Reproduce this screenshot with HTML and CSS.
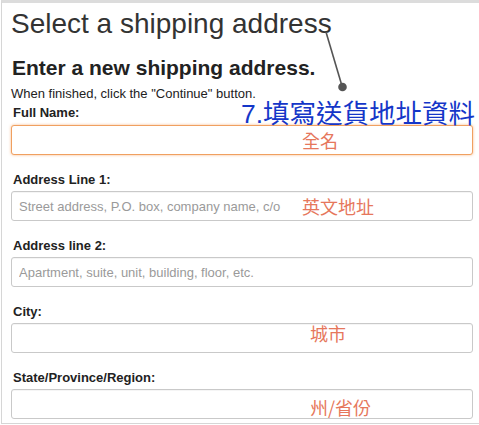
FILE: index.html
```html
<!DOCTYPE html>
<html lang="zh-Hant">
<head>
<meta charset="utf-8">
<link rel="stylesheet" href="styles.css">
</head>
<body>
<div class="frame">
  <h1 class="title">Select a shipping address</h1>
  <h2 class="subtitle">Enter a new shipping address.</h2>
  <p class="hint">When finished, click the "Continue" button.</p>

  <div class="field field-first">
    <label class="label">Full Name:</label>
    <div class="box">
      <input class="input input-focus" type="text">
      <span class="note note-name">全名</span>
    </div>
  </div>

  <div class="field">
    <label class="label">Address Line 1:</label>
    <div class="box">
      <input class="input" type="text" placeholder="Street address, P.O. box, company name, c/o">
      <span class="note note-addr">英文地址</span>
    </div>
  </div>

  <div class="field">
    <label class="label">Address line 2:</label>
    <div class="box">
      <input class="input" type="text" placeholder="Apartment, suite, unit, building, floor, etc.">
    </div>
  </div>

  <div class="field">
    <label class="label">City:</label>
    <div class="box">
      <input class="input" type="text">
      <span class="note note-city">城市</span>
    </div>
  </div>

  <div class="field">
    <label class="label">State/Province/Region:</label>
    <div class="box">
      <input class="input" type="text">
      <span class="note note-state">州/省份</span>
    </div>
  </div>

  <svg class="pointer" width="40" height="70" viewBox="0 0 40 70">
    <line x1="4" y1="2" x2="20" y2="56" stroke="#555" stroke-width="1.6"/>
    <circle cx="20.5" cy="57" r="4.3" fill="#555"/>
  </svg>
  <div class="callout">7.填寫送貨地址資料</div>
</div>
</body>
</html>
```

FILE: styles.css
```css
html, body {
  margin: 0;
  padding: 0;
  background: #fff;
}

.frame {
  position: relative;
  box-sizing: border-box;
  width: 478px;
  height: 424px;
  margin-left: 1px;
  border-top: 3px solid #dcdcdc;
  border-left: 1px solid #d6d6d6;
  border-bottom: 1px solid #d6d6d6;
  padding: 5px 0 0 9px;
  font-family: "Liberation Sans", Arial, sans-serif;
  color: #333;
}

.title {
  margin: 0;
  font-size: 28px;
  line-height: 32px;
  font-weight: normal;
  color: #333;
}

.subtitle {
  margin: 16px 0 0 1px;
  font-size: 21px;
  line-height: 24px;
  font-weight: bold;
  color: #222;
}

.hint {
  margin: 6px 0 0 0;
  font-size: 13px;
  line-height: 15px;
  color: #222;
}

.field {
  display: flex;
  flex-direction: column;
  margin-top: 17px;
}

.field-first {
  margin-top: 4px;
}

.label {
  margin-left: 2px;
  font-size: 13px;
  line-height: 16px;
  font-weight: bold;
  color: #222;
}

.field-first .label {
  margin-bottom: 1px;
}

.box {
  position: relative;
  margin-top: 3px;
}

.input {
  display: block;
  box-sizing: border-box;
  width: 462px;
  height: 30px;
  margin: 0;
  padding: 0 7px;
  border: 1px solid #c9c9c9;
  border-radius: 3px;
  box-shadow: inset 0 1px 0 rgba(0, 0, 0, 0.04);
  font-family: "Liberation Sans", Arial, sans-serif;
  font-size: 13px;
  color: #333;
  background: #fff;
  outline: none;
}

.input::placeholder {
  color: #9a9a9a;
}

.input-focus {
  border-color: #f0a060;
  box-shadow: 0 0 3px rgba(240, 140, 60, 0.6);
}

.note {
  position: absolute;
  font-family: "Noto Sans CJK TC", "Noto Sans CJK SC", sans-serif;
  font-size: 18px;
  line-height: 20px;
  color: #e6775c;
  white-space: nowrap;
}

.note-name { left: 291px; top: 5px; }
.note-addr { left: 291px; top: 5px; }
.note-city { left: 299px; top: 0px; }
.note-state { left: 299px; top: 8px; }

.pointer {
  position: absolute;
  left: 320px;
  top: 27px;
}

.callout {
  position: absolute;
  right: 4px;
  top: 96px;
  font-family: "Liberation Sans", "Noto Sans CJK TC", sans-serif;
  font-size: 26.5px;
  line-height: 30px;
  color: #1436c8;
  white-space: nowrap;
}
```
